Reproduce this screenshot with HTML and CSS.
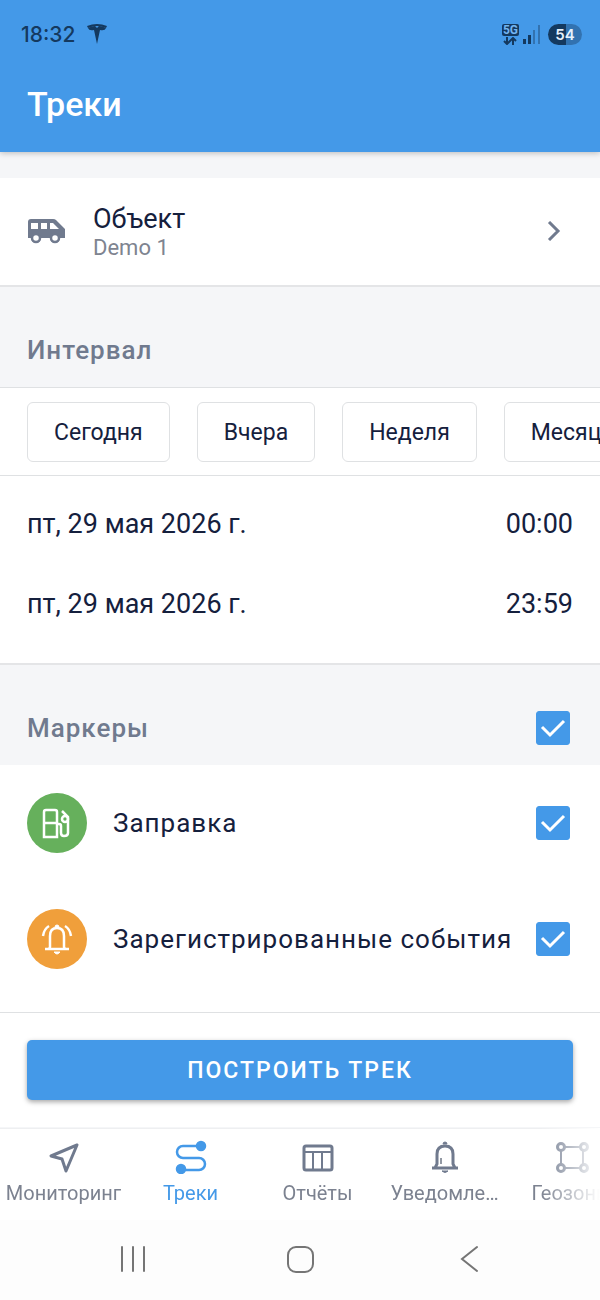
FILE: index.html
```html
<!DOCTYPE html>
<html lang="ru">
    <head>
        <meta charset="UTF-8" />
        <meta name="viewport" content="width=device-width, initial-scale=1" />
        <title>Треки</title>
        <link rel="stylesheet" href="styles.css">
    </head>
    <body>
    <div class="screen">
        <header class="top">
            <div class="status-bar">
                <div class="status-left">
                    <span class="clock">18:32</span>
                    <svg width="20" height="20" viewBox="0 0 20 20" fill="#14395f">
                        <path d="M0 2Q10-2 20 2L19 4Q10 0 1 4Z" />
                        <path d="M1 4Q5 2 8 2L10 4L12 2Q15 2 19 4Q18 7 13 6L10 20L7 6Q2 7 1 4Z" />
                    </svg>
                </div>
                <div class="status-right">
                    <div class="network">
                        <span class="network-type">5G</span>
                        <svg width="14" height="8" viewBox="0 0 14 8" fill="none" stroke="#14395f" stroke-width="2">
                            <path d="M4 0V7M1 4L4 7L7 4M10 8V1M7 4L10 1L13 4" />
                        </svg>
                    </div>
                    <svg width="17" height="19" viewBox="0 0 17 19">
                        <path d="M0 14h3v5H0zM5 10h3v9H5z" fill="#14395f" />
                        <path d="M10 5h2v14h-2zM15 0h2v19h-2z" fill="#3272b0" />
                    </svg>
                    <span class="battery">54</span>
                </div>
            </div>
            <h1>Треки</h1>
        </header>

        <main>
            <button class="object-row">
                <svg class="van" width="38" height="26" viewBox="0 0 38 26">
                    <path fill="#707a8e" fill-rule="evenodd" d="M4 1H26Q28 1 29 2L38 11V20H33A5 5 0 0 1 23 20H14A5 5 0 0 1 4 20H1V4Q1 1 4 1ZM4 5V11H11V5ZM14 5V11H20V5ZM23 5V11H32L26 5Z" />
                    <circle cx="9" cy="20" r="4" fill="#fff" stroke="#707a8e" stroke-width="2.5" />
                    <circle cx="28" cy="20" r="4" fill="#fff" stroke="#707a8e" stroke-width="2.5" />
                </svg>
                <span class="object-text">
                    <span class="object-title">Объект</span>
                    <span class="object-name">Demo 1</span>
                </span>
                <svg width="14" height="20" viewBox="0 0 14 20" fill="none" stroke="#707a8e" stroke-width="3">
                    <path d="M2 1L11 10L2 19" />
                </svg>
            </button>

            <div class="section-head">
                <h2>Интервал</h2>
            </div>
            <div class="chips">
                <button class="chip">Сегодня</button>
                <button class="chip">Вчера</button>
                <button class="chip">Неделя</button>
                <button class="chip">Месяц</button>
            </div>
            <div class="dates">
                <div class="date-row">
                    <button>пт, 29 мая 2026 г.</button>
                    <button>00:00</button>
                </div>
                <div class="date-row">
                    <button>пт, 29 мая 2026 г.</button>
                    <button>23:59</button>
                </div>
            </div>

            <div class="section-head">
                <h2><label for="all">Маркеры</label></h2>
                <input type="checkbox" id="all" checked>
            </div>
            <div class="markers">
                <div class="marker">
                    <span class="marker-icon green">
                        <svg width="30" height="32" viewBox="0 0 30 32" fill="none" stroke="#fff" stroke-width="2.5">
                            <path d="M2 30V5Q2 3 4 3H13Q15 3 15 5V30ZM2 16H15M15 17H17Q19 17 19 19V26Q19 29 22 29Q26 29 26 26V10L20 4" />
                            <circle cx="23" cy="12" r="3" />
                        </svg>
                    </span>
                    <label for="fuel">Заправка</label>
                    <input type="checkbox" id="fuel" checked>
                </div>
                <div class="marker">
                    <span class="marker-icon orange">
                        <svg width="32" height="32" viewBox="0 0 32 32" fill="none" stroke="#fff" stroke-width="2.5">
                            <path d="M4 26H28M8 26L9 24V13Q9 5 16 5Q23 5 23 13V24L24 26M2 13Q3 6 8 3M30 13Q29 6 24 3" />
                            <path d="M14 4A2 2 0 0 1 18 4ZM13 29H19Q16 33 13 29Z" fill="#fff" stroke-width="1" />
                        </svg>
                    </span>
                    <label for="events">Зарегистрированные события</label>
                    <input type="checkbox" id="events" checked>
                </div>
            </div>
            <div class="action">
                <button class="build">Построить трек</button>
            </div>
        </main>

        <nav class="tabs">
            <a href="#monitoring">
                <svg width="34" height="34" viewBox="0 0 34 34" fill="none" stroke="#707a8e" stroke-width="3" stroke-linejoin="round">
                    <path d="M30 5L4 16L15 19L19 31Z" />
                </svg>
                <span>Мониторинг</span>
            </a>
            <a href="#tracks" class="active">
                <svg width="34" height="34" viewBox="0 0 34 34" fill="none" stroke="#4499e8" stroke-width="2.5">
                    <path d="M27 6H9A6 6 0 0 0 9 18H25A6 6 0 0 1 25 30H7" />
                    <circle cx="27" cy="6" r="4" fill="#4499e8" />
                    <circle cx="7" cy="29" r="4" fill="#4499e8" />
                </svg>
                <span>Треки</span>
            </a>
            <a href="#reports">
                <svg width="34" height="34" viewBox="0 0 34 34" fill="none" stroke="#707a8e" stroke-width="2">
                    <rect x="3" y="6" width="28" height="24" rx="2" stroke-width="3" />
                    <path d="M3 12H31M12 12V30M21 12V30" />
                </svg>
                <span>Отчёты</span>
            </a>
            <a href="#notifications">
                <svg width="34" height="34" viewBox="0 0 34 34" fill="none" stroke="#707a8e" stroke-width="3">
                    <path d="M4 28H30M7 28L9 24V14Q9 6 17 6Q25 6 25 14V24L27 28" />
                    <path d="M13 18V24" stroke="#263249" stroke-width="1" />
                    <path d="M15 4A2 2 0 0 1 19 4ZM14 31H20Q17 34 14 31Z" fill="#707a8e" stroke-width="1" />
                </svg>
                <span>Уведомле…</span>
            </a>
            <a href="#zones">
                <svg width="34" height="34" viewBox="0 0 34 34" fill="none" stroke="#707a8e" stroke-width="2">
                    <path d="M9 7H26M9 28H26M6 11V24M28 11V24" />
                    <g stroke-width="3">
                        <circle cx="6" cy="7" r="3.500" />
                        <circle cx="29" cy="7" r="3.500" />
                        <circle cx="6" cy="28" r="3.500" />
                        <circle cx="29" cy="28" r="3.500" />
                    </g>
                </svg>
                <span>Геозоны</span>
            </a>
        </nav>

        <div class="system-nav">
            <button aria-label="Недавние">
                <svg width="28" height="28" viewBox="0 0 28 28" fill="none" stroke="#757575" stroke-width="2" stroke-linecap="round">
                    <path d="M4 2V26M15 2V26M26 2V26" />
                </svg>
            </button>
            <button aria-label="Домой">
                <svg width="28" height="28" viewBox="0 0 28 28" fill="none" stroke="#757575" stroke-width="2">
                    <rect x="2" y="2" width="25" height="25" rx="8" />
                </svg>
            </button>
            <button aria-label="Назад">
                <svg width="28" height="28" viewBox="0 0 28 28" fill="none" stroke="#757575" stroke-width="2" stroke-linecap="round">
                    <path d="M23 2L8 14L23 26" />
                </svg>
            </button>
        </div>
    </div>
    </body>
</html>
```
FILE: styles.css
```css
* {
    box-sizing: border-box;
}
body {
    margin: 0;
    font-family: Roboto, "Noto Sans", sans-serif;
    font-size: 26px;
    color: #15203d;
    background-color: #fff;
}
button {
    padding: 0;
    border: none;
    background: none;
    font: inherit;
    color: inherit;
    cursor: pointer;
}
h1, h2 {
    margin: 0;
    font-weight: 500;
}
svg {
    display: block;
    flex-shrink: 0;
}
.screen {
    display: flex;
    flex-direction: column;
    min-height: 100vh;
}

/* header */
.top {
    position: relative;
    background-color: #4499e8;
    color: #fff;
    box-shadow: 0 1px 6px rgba(0, 0, 0, 0.25);
}
.status-bar {
    display: flex;
    justify-content: space-between;
    align-items: center;
    height: 68px;
    padding: 0 18px 0 21px;
}
.status-left, .status-right {
    display: flex;
    align-items: center;
}
.status-left {
    gap: 12px;
}
.status-right {
    gap: 4px;
}
.clock {
    font-family: Inter, Roboto, sans-serif;
    font-size: 21px;
    font-weight: 500;
    color: #14395f;
}
.network {
    display: flex;
    flex-direction: column;
    align-items: center;
    gap: 1px;
}
.network-type {
    padding: 0 1px;
    border-radius: 2px;
    background-color: #14395f;
    color: #73b4f0;
    font-size: 12px;
    font-weight: 700;
    line-height: 12px;
}
.battery {
    width: 34px;
    margin-left: 4px;
    border-radius: 11px;
    background: linear-gradient(to right, #14395f 54%, #3272b0 54%);
    color: #e6f1fc;
    font-family: Inter, Roboto, sans-serif;
    font-size: 15px;
    font-weight: 600;
    line-height: 21px;
    text-align: center;
}
.top h1 {
    padding: 16px 27px 28px;
    font-size: 34px;
    line-height: 40px;
}

/* object */
main {
    flex: 1;
    padding-top: 26px;
    background-color: #f5f6f8;
}
.object-row {
    display: flex;
    align-items: center;
    width: 100%;
    padding: 24px 39px 25px 27px;
    border-bottom: 2px solid #e4e5e7;
    background-color: #fff;
    text-align: left;
}
.object-text {
    display: flex;
    flex: 1;
    flex-direction: column;
    margin-left: 28px;
}
.object-title {
    font-size: 27px;
    line-height: 34px;
}
.object-name {
    color: #7e8490;
    font-size: 22px;
    line-height: 24px;
}

/* interval */
.section-head {
    display: flex;
    justify-content: space-between;
    align-items: center;
    padding: 45px 30px 19px 27px;
    color: #707a8e;
    line-height: 36px;
    letter-spacing: 1px;
}
.section-head h2 {
    font-size: 26px;
}
.chips {
    display: flex;
    gap: 27px;
    padding: 14px 27px 13px;
    border-top: 1px solid #dfe1e3;
    border-bottom: 1px solid #dfe1e3;
    background-color: #fff;
    overflow: hidden;
}
.chip {
    flex-shrink: 0;
    height: 60px;
    padding: 0 26px;
    border: 1px solid #dfe1e3;
    border-radius: 6px;
    font-size: 23px;
}
.dates {
    padding: 8px 27px 19px;
    border-bottom: 2px solid #e4e5e7;
    background-color: #fff;
    font-size: 27px;
}
.date-row {
    display: flex;
    justify-content: space-between;
    height: 80px;
}

/* markers */
.markers {
    padding-bottom: 15px;
    background-color: #fff;
}
.marker {
    display: flex;
    align-items: center;
    height: 116px;
    padding: 0 30px 0 27px;
    letter-spacing: 1px;
}
.marker label {
    flex: 1;
    margin-left: 26px;
    white-space: nowrap;
}
.marker-icon {
    display: flex;
    justify-content: center;
    align-items: center;
    width: 60px;
    height: 60px;
    border-radius: 50%;
}
.green {
    background-color: #66b05c;
}
.orange {
    background-color: #f09f3b;
}
input[type="checkbox"] {
    appearance: none;
    flex-shrink: 0;
    width: 34px;
    height: 34px;
    margin: 0;
    border: 1px solid #4499e8;
    border-radius: 3px;
    background-color: #fff;
}
input[type="checkbox"]:checked {
    background: #4499e8 url("data:image/svg+xml,%3Csvg xmlns='http://www.w3.org/2000/svg' viewBox='0 0 32 32' fill='none' stroke='white' stroke-width='3'%3E%3Cpath d='M5 15L13 23L27 9'/%3E%3C/svg%3E") center / 32px no-repeat;
}
.action {
    padding: 27px;
    border-top: 1px solid #dfe1e3;
    background-color: #fff;
}
.build {
    display: block;
    width: 100%;
    height: 60px;
    border-radius: 5px;
    background-color: #4499e8;
    box-shadow: 0 2px 5px rgba(0, 0, 0, 0.35);
    color: #fff;
    font-size: 23px;
    font-weight: 500;
    letter-spacing: 2px;
    text-transform: uppercase;
}

/* bottom navigation */
.tabs {
    display: flex;
    border-top: 1px solid #eeeff1;
    overflow: hidden;
    -webkit-mask-image: linear-gradient(to left, transparent, #000 60px);
    mask-image: linear-gradient(to left, transparent, #000 60px);
}
.tabs a {
    display: flex;
    flex: 0 0 127px;
    flex-direction: column;
    align-items: center;
    gap: 7px;
    min-width: 0;
    padding: 11px 4px 15px;
    color: #7c8290;
    font-size: 20px;
    line-height: 24px;
    text-decoration: none;
}
.tabs span {
    max-width: 100%;
    overflow: hidden;
    text-overflow: ellipsis;
    white-space: nowrap;
}
.tabs .active {
    color: #4499e8;
}
.system-nav {
    display: flex;
    justify-content: center;
    gap: 140px;
    padding: 25px 0 27px;
    background-color: #fdfdfd;
}
```
